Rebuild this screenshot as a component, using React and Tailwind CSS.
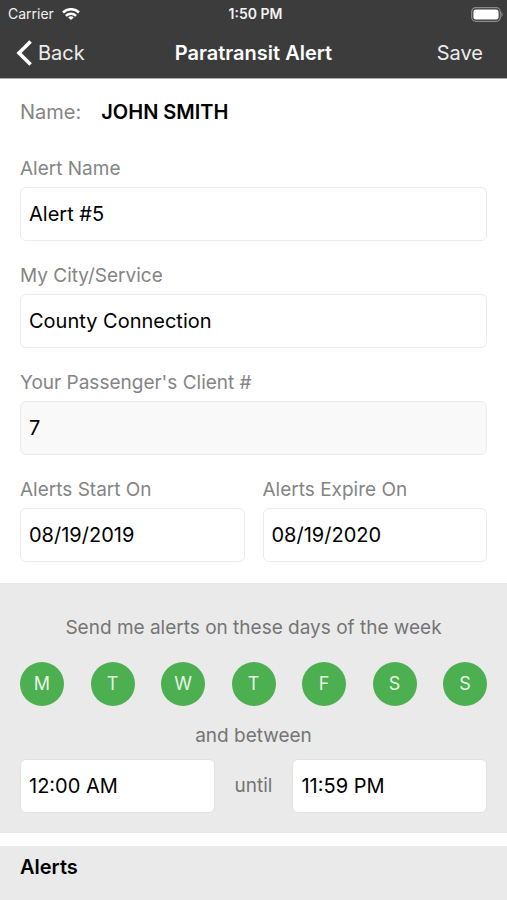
import React, { useState } from 'react';

const weekDays = [
  { id: 'mon', name: 'Monday', letter: 'M' },
  { id: 'tue', name: 'Tuesday', letter: 'T' },
  { id: 'wed', name: 'Wednesday', letter: 'W' },
  { id: 'thu', name: 'Thursday', letter: 'T' },
  { id: 'fri', name: 'Friday', letter: 'F' },
  { id: 'sat', name: 'Saturday', letter: 'S' },
  { id: 'sun', name: 'Sunday', letter: 'S' },
];

const inputClass =
  'block h-[54px] w-full min-w-0 rounded-md border px-2 text-xl text-black focus:outline-none focus:border-gray-400';

const Field = ({ id, label, value, onChange, readOnly = false }) => (
  <div className="min-w-0 flex-1">
    <label htmlFor={id} className="mb-1.5 block text-[19px] leading-6 text-[#858585]">
      {label}
    </label>
    <input
      id={id}
      type="text"
      value={value}
      onChange={onChange}
      readOnly={readOnly}
      className={`${inputClass} border-[#ebebeb] ${readOnly ? 'bg-[#f9f9f9]' : 'bg-white'}`}
    />
  </div>
);

const StatusBar = () => (
  <div className="grid h-7 grid-cols-[1fr_auto_1fr] items-center pl-2 pr-1 text-[#f2f2f2]">
    <div className="flex items-center gap-2 text-sm">
      <span>Carrier</span>
      <svg className="h-3 w-[18px]" viewBox="0 0 18 12" fill="none" stroke="white" strokeWidth="2.5">
        <path d="M1 4.5a11.3 11.3 0 0 1 16 0" />
        <path d="M3.9 7.8a7.2 7.2 0 0 1 10.2 0" />
        <path d="M9 12 6.2 9.5a3.9 3.9 0 0 1 5.6 0z" fill="white" stroke="none" />
      </svg>
    </div>
    <span className="text-center text-sm font-semibold">1:50 PM</span>
    <svg className="h-[15px] w-8 justify-self-end" viewBox="0 0 32 15" fill="none">
      <rect x="0.7" y="0.7" width="28.6" height="13.6" rx="4" stroke="#8b8b8b" strokeWidth="1.2" />
      <rect x="2.4" y="2.4" width="25.2" height="10.2" rx="2.4" fill="white" />
      <path d="M30.4 5.2c1.6.6 1.6 4 0 4.6z" fill="#8b8b8b" />
    </svg>
  </div>
);

const App = () => {
  const [form, setForm] = useState({
    alertName: 'Alert #5',
    service: 'County Connection',
    clientNumber: '7',
    startDate: '08/19/2019',
    endDate: '08/19/2020',
    startTime: '12:00 AM',
    endTime: '11:59 PM',
  });
  const [days, setDays] = useState(weekDays.map((day) => day.id));

  const handleChange = (key) => (e) => {
    setForm({ ...form, [key]: e.target.value });
  };

  const toggleDay = (id) => {
    setDays(days.includes(id) ? days.filter((day) => day !== id) : [...days, id]);
  };

  return (
    <div className="flex min-h-screen flex-col bg-white font-['Inter','Liberation_Sans',sans-serif]">
      <header className="border-b border-[#a8a8a8] bg-[#3c3c3c]">
        <StatusBar />
        <div className="grid h-[50px] grid-cols-[1fr_auto_1fr] items-center px-4 text-xl">
          <button type="button" className="flex items-center gap-1.5 justify-self-start text-[#ececec]">
            <svg className="h-[26px] w-4" viewBox="0 0 16 26" fill="none" stroke="white" strokeWidth="3.6">
              <path d="M14.6 1.4 3 13l11.6 11.6" />
            </svg>
            Back
          </button>
          <h1 className="font-semibold text-white">Paratransit Alert</h1>
          <button type="button" className="justify-self-end pr-2 text-[#ececec]">
            Save
          </button>
        </div>
      </header>

      <main className="flex flex-1 flex-col">
        <section className="flex flex-col gap-[23px] px-5 py-[21px]">
          <div className="mb-2.5 flex items-center gap-5 text-xl leading-6">
            <span className="text-[#858585]">Name:</span>
            <span className="font-semibold text-black">JOHN SMITH</span>
          </div>
          <Field id="alertName" label="Alert Name" value={form.alertName} onChange={handleChange('alertName')} />
          <Field id="service" label="My City/Service" value={form.service} onChange={handleChange('service')} />
          <Field id="clientNumber" label="Your Passenger's Client #" value={form.clientNumber} readOnly />
          <div className="flex gap-[18px]">
            <Field id="startDate" label="Alerts Start On" value={form.startDate} onChange={handleChange('startDate')} />
            <Field id="endDate" label="Alerts Expire On" value={form.endDate} onChange={handleChange('endDate')} />
          </div>
        </section>

        <section className="bg-[#eaeaea] px-5 pb-5 pt-[33px] text-[19px] leading-6 text-[#757575]">
          <p className="text-center">Send me alerts on these days of the week</p>
          <div className="mt-[22px] flex justify-between">
            {weekDays.map((day) => (
              <button
                key={day.id}
                type="button"
                aria-label={day.name}
                aria-pressed={days.includes(day.id)}
                onClick={() => toggleDay(day.id)}
                className={`h-11 w-11 rounded-full text-lg ${
                  days.includes(day.id) ? 'bg-[#4caf50] text-[#e6f5e6]' : 'bg-white text-[#757575]'
                }`}
              >
                {day.letter}
              </button>
            ))}
          </div>
          <p className="mb-[11px] mt-[18px] text-center">and between</p>
          <div className="flex items-center">
            <input
              type="text"
              aria-label="Start time"
              value={form.startTime}
              onChange={handleChange('startTime')}
              className={`${inputClass} flex-1 border-[#e2e2e2] bg-white`}
            />
            <span className="px-5">until</span>
            <input
              type="text"
              aria-label="End time"
              value={form.endTime}
              onChange={handleChange('endTime')}
              className={`${inputClass} flex-1 border-[#e2e2e2] bg-white`}
            />
          </div>
        </section>

        <section className="mt-[13px] flex-1 bg-[#eaeaea] px-5 py-[9px]">
          <h2 className="text-xl leading-6 font-semibold text-black">Alerts</h2>
        </section>
      </main>
    </div>
  );
};

export default App;
